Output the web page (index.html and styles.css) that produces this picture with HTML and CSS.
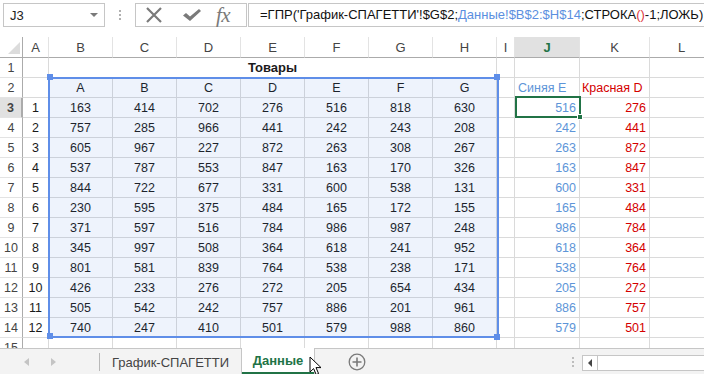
FILE: index.html
```html
<!DOCTYPE html>
<html lang="ru">
<head>
<meta charset="utf-8">
<title>Данные</title>
<link rel="stylesheet" href="styles.css">
</head>
<body>
<div class="app">
  <div class="fbar">
    <div class="namebox"><span>J3</span><span class="dd"></span></div>
    <div class="grip"><i></i><i></i><i></i></div>
    <div class="fbtns">
      <svg class="ic-x" width="18" height="18" viewBox="0 0 18 18"><path d="M2 2 L16 16 M16 2 L2 16" stroke="#7a7a7a" stroke-width="2.2" fill="none"/></svg>
      <svg class="ic-ok" width="20" height="14" viewBox="0 0 20 14"><path d="M1 7.5 L4 5 L8 8.5 L17 1 L19 3 L8 13 Z" fill="#7a7a7a"/></svg>
      <span class="fx">fx</span>
    </div>
    <div class="finput">=ГПР('График-СПАГЕТТИ'!$G$2;<span class="fb">Данные!$B$2:$H$14</span>;СТРОКА<span class="fr">()</span>-1;ЛОЖЬ)</div>
  </div>

  <div class="sheet">
    <div class="r hd"><span class="corner"></span><span>A</span><span>B</span><span>C</span><span>D</span><span>E</span><span>F</span><span>G</span><span>H</span><span>I</span><span class="selc">J</span><span>K</span><span>L</span></div>
    <div class="r"><span>1</span><span></span><span class="title">Товары</span><span></span><span></span><span></span><span></span></div>
    <div class="r"><span>2</span><span></span><span>A</span><span>B</span><span>C</span><span>D</span><span>E</span><span>F</span><span>G</span><span></span><span class="lb">Синяя E</span><span class="lr">Красная D</span><span></span></div>
    <div class="r"><span class="selr">3</span><span>1</span><span>163</span><span>414</span><span>702</span><span>276</span><span>516</span><span>818</span><span>630</span><span></span><span class="nb">516</span><span class="nr">276</span><span></span></div>
    <div class="r"><span>4</span><span>2</span><span>757</span><span>285</span><span>966</span><span>441</span><span>242</span><span>243</span><span>208</span><span></span><span class="nb">242</span><span class="nr">441</span><span></span></div>
    <div class="r"><span>5</span><span>3</span><span>605</span><span>967</span><span>227</span><span>872</span><span>263</span><span>308</span><span>267</span><span></span><span class="nb">263</span><span class="nr">872</span><span></span></div>
    <div class="r"><span>6</span><span>4</span><span>537</span><span>787</span><span>553</span><span>847</span><span>163</span><span>170</span><span>326</span><span></span><span class="nb">163</span><span class="nr">847</span><span></span></div>
    <div class="r"><span>7</span><span>5</span><span>844</span><span>722</span><span>677</span><span>331</span><span>600</span><span>538</span><span>131</span><span></span><span class="nb">600</span><span class="nr">331</span><span></span></div>
    <div class="r"><span>8</span><span>6</span><span>230</span><span>595</span><span>375</span><span>484</span><span>165</span><span>172</span><span>155</span><span></span><span class="nb">165</span><span class="nr">484</span><span></span></div>
    <div class="r"><span>9</span><span>7</span><span>371</span><span>597</span><span>516</span><span>784</span><span>986</span><span>987</span><span>248</span><span></span><span class="nb">986</span><span class="nr">784</span><span></span></div>
    <div class="r"><span>10</span><span>8</span><span>345</span><span>997</span><span>508</span><span>364</span><span>618</span><span>241</span><span>952</span><span></span><span class="nb">618</span><span class="nr">364</span><span></span></div>
    <div class="r"><span>11</span><span>9</span><span>801</span><span>581</span><span>839</span><span>764</span><span>538</span><span>238</span><span>171</span><span></span><span class="nb">538</span><span class="nr">764</span><span></span></div>
    <div class="r"><span>12</span><span>10</span><span>426</span><span>233</span><span>276</span><span>272</span><span>205</span><span>654</span><span>434</span><span></span><span class="nb">205</span><span class="nr">272</span><span></span></div>
    <div class="r"><span>13</span><span>11</span><span>505</span><span>542</span><span>242</span><span>757</span><span>886</span><span>201</span><span>961</span><span></span><span class="nb">886</span><span class="nr">757</span><span></span></div>
    <div class="r"><span>14</span><span>12</span><span>740</span><span>247</span><span>410</span><span>501</span><span>579</span><span>988</span><span>860</span><span></span><span class="nb">579</span><span class="nr">501</span><span></span></div>
    <div class="r"><span>15</span><span></span><span></span><span></span><span></span><span></span><span></span><span></span><span></span><span></span><span></span><span></span><span></span></div>

    <div class="range"></div>
    <i class="hdl h-tl"></i><i class="hdl h-tr"></i><i class="hdl h-bl"></i><i class="hdl h-br"></i>
    <div class="active"></div>
    <i class="fill"></i>
  </div>

  <div class="tabs">
    <div class="nav"><span class="tl"></span><span class="tr"></span></div>
    <div class="tab first">График-СПАГЕТТИ</div>
    <div class="tab on">Данные</div>
    <svg class="plus" width="18" height="18" viewBox="0 0 18 18"><circle cx="9" cy="9" r="7.8" fill="none" stroke="#7a7a7a" stroke-width="1.3"/><path d="M9 4.5 V13.5 M4.5 9 H13.5" stroke="#7a7a7a" stroke-width="1.6"/></svg>
    <div class="sp"></div>
    <div class="grip2"><i></i><i></i><i></i></div>
    <div class="hscroll"><span class="sb"><span class="la"></span></span></div>
    <svg class="cursor" width="14" height="20" viewBox="0 0 14 20"><path d="M1 1 L1 16 L4.6 12.6 L7.2 18.6 L9.6 17.6 L7 11.6 L12 11.6 Z" fill="#fff" stroke="#000" stroke-width="1" stroke-linejoin="round"/></svg>
  </div>
</div>
</body>
</html>
```

FILE: styles.css
```css
* { box-sizing: border-box; margin: 0; padding: 0; }
body {
  width: 704px; height: 374px; overflow: hidden;
  background: #fff; color: #1a1a1a;
  font-family: "Liberation Sans", Arial, sans-serif;
}
.app { display: flex; flex-direction: column; height: 374px; }

/* formula bar */
.fbar { height: 37px; display: flex; align-items: flex-start; padding: 3px 0 0 3px; }
.namebox {
  width: 102px; height: 24px; border: 1px solid #c6c6c6;
  display: flex; align-items: center; justify-content: space-between;
  padding: 0 6px 0 6px; font-size: 13px; color: #222;
}
.dd { width: 0; height: 0; border-left: 4px solid transparent; border-right: 4px solid transparent; border-top: 4px solid #7a7a7a; }
.grip { width: 30px; height: 24px; display: flex; flex-direction: column; align-items: center; justify-content: center; gap: 2px; }
.grip i, .grip2 i { display: block; width: 2px; height: 2px; background: #b0b0b0; }
.fbtns {
  width: 112px; height: 24px; border: 1px solid #c6c6c6;
  display: flex; align-items: center; padding-left: 9px;
}
.ic-x { margin-right: 19px; }
.ic-ok { margin-right: 14px; }
.fx { font-family: "Liberation Serif", "Times New Roman", serif; font-style: italic; font-size: 21px; color: #7a7a7a; line-height: 20px; letter-spacing: -0.5px; }
.finput {
  flex: 1; height: 24px; margin-left: 1px;
  border: 1px solid #c6c6c6; border-right: none;
  padding-left: 11px; font-size: 13px; line-height: 22px;
  white-space: nowrap; overflow: hidden; color: #111;
}
.fb { color: #5b8fe0; }
.fr { color: #e0393e; }

/* sheet */
.sheet { position: relative; height: 311px; overflow: hidden; }
.r {
  display: grid;
  grid-template-columns: 23px 26px repeat(7, 64px) 18px 65px 70px 64px;
  height: 20px;
}
.r > span {
  border-right: 1px solid #dadada; border-bottom: 1px solid #dadada;
  display: flex; align-items: center; justify-content: center;
  font-size: 12.5px; white-space: nowrap; overflow: hidden;
}
.r > span:first-child {
  border-right-color: #ababab; border-bottom-color: #e3e3e3;
  color: #444; font-size: 12.5px;
}
.hd { height: 21px; }
.hd > span {
  border-bottom: 1px solid #ababab !important; border-right-color: #e3e3e3;
  color: #444; font-size: 13px;
}
.corner { position: relative; }
.corner::after {
  content: ""; position: absolute; right: 2px; bottom: 3px;
  width: 0; height: 0;
  border-left: 12px solid transparent; border-bottom: 12px solid #dcdcdc;
}
.selc { background: #e1e1e1; color: #217346 !important; font-weight: bold; border-bottom: 2px solid #217346 !important; }
.r > .selr { background: #e1e1e1; color: #217346; font-weight: bold; border-right: 2px solid #217346; }
.title { grid-column: span 7; font-weight: bold; font-size: 13px !important; }
.lb { color: #5d95d8; justify-content: flex-start !important; padding-left: 3px; }
.lr { color: #d40000; justify-content: flex-start !important; padding-left: 2px; }
.nb { color: #5d95d8; justify-content: flex-end !important; padding-right: 3px; }
.nr { color: #d40000; justify-content: flex-end !important; padding-right: 3px; }

.range {
  position: absolute; left: 48px; top: 40px; width: 451px; height: 261px;
  border: 2px solid #5f8ee8; background: rgba(70, 120, 225, 0.09);
}
.hdl { position: absolute; width: 6px; height: 6px; background: #5f8ee8; }
.h-tl { left: 47px; top: 37px; }
.h-tr { left: 494px; top: 37px; }
.h-bl { left: 47px; top: 296px; }
.h-br { left: 494px; top: 297px; }
.active { position: absolute; left: 515px; top: 59px; width: 66px; height: 22px; border: 2px solid #217346; }
.fill { position: absolute; left: 577px; top: 77px; width: 6px; height: 6px; background: #217346; border: 1px solid #fff; }

/* tabs */
.tabs {
  position: relative; flex: 1; display: flex; align-items: stretch;
  background: #f3f3f3; border-top: 1px solid #c6c6c6; font-size: 13px;
}
.nav { width: 99px; display: flex; align-items: center; padding-left: 24px; gap: 22px; }
.tl { width: 0; height: 0; border-top: 4px solid transparent; border-bottom: 4px solid transparent; border-right: 5px solid #c4c4c4; }
.tr { width: 0; height: 0; border-top: 4px solid transparent; border-bottom: 4px solid transparent; border-left: 5px solid #c4c4c4; }
.tab {
  display: flex; align-items: center; justify-content: center;
  color: #444; flex: none;
}
.tab.first { width: 142px; border-left: 1px solid #b8b8b8; margin: 4px 0 3px; padding-top: 1px; }
.tab.on {
  width: 74px; margin-top: -1px; background: #fff; padding-bottom: 1px;
  border-left: 1px solid #c6c6c6; border-right: 1px solid #c6c6c6;
  color: #217346; font-weight: bold;
  box-shadow: inset 0 -2px 0 #217346;
}
.plus { align-self: center; margin-left: 33px; }
.sp { flex: 1; }
.grip2 { width: 18px; display: flex; flex-direction: column; align-items: center; justify-content: center; gap: 2px; margin-right: 0; }
.grip2 i { background: #bdbdbd; }
.hscroll {
  width: 122px; margin: 6px 0 3px; background: #fff;
  border: 1px solid #c6c6c6; border-right: none; display: flex;
}
.sb { width: 15px; border-right: 1px solid #c6c6c6; display: flex; align-items: center; justify-content: center; }
.la { width: 0; height: 0; border-top: 4px solid transparent; border-bottom: 4px solid transparent; border-right: 4px solid #444; }
.cursor { position: absolute; left: 309px; top: 7px; }
```
